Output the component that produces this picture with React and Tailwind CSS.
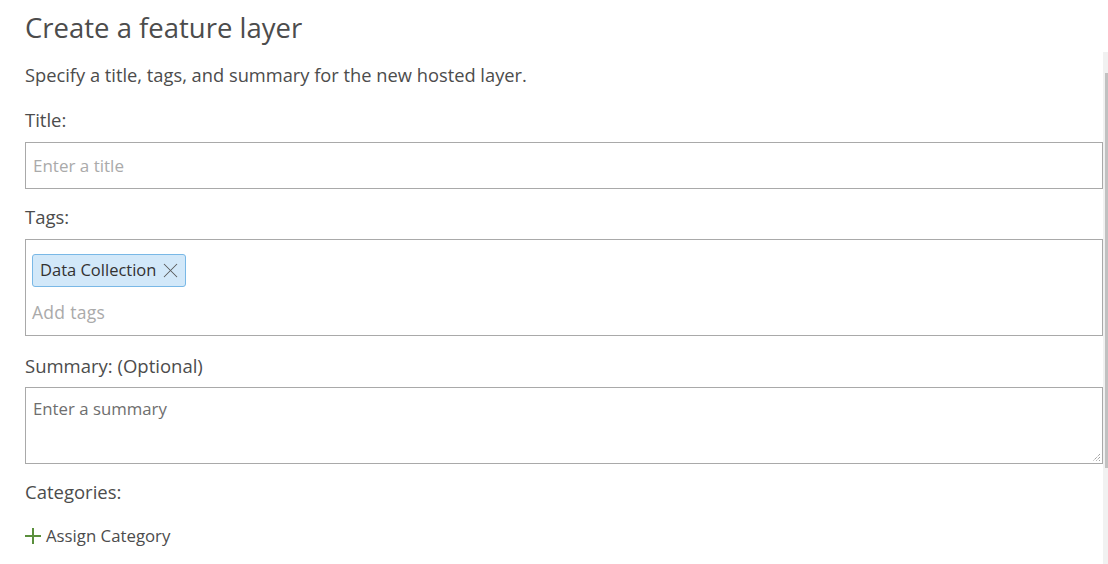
import { X } from "lucide-react";

const font = { fontFamily: '"Open Sans", "Liberation Sans", sans-serif' };

function Label({ children, className = "" }) {
  return <p className={`text-[18.5px] leading-6 text-[#4c4c4c] ${className}`}>{children}</p>;
}

export default function App() {
  return (
    <div className="flex h-[564px] w-[1108px] overflow-hidden bg-white" style={font}>
      <div className="flex-1 pl-[25px]">
        <h1 className="mt-[11px] text-[27.5px] leading-[34px] text-[#4c4c4c]">Create a feature layer</h1>

        <p className="mt-[18px] text-[18.3px] leading-6 text-[#4c4c4c]">
          Specify a title, tags, and summary for the new hosted layer.
        </p>

        <Label className="mt-[21px]">Title:</Label>
        <div className="mt-[10px] flex h-[47px] items-center border border-[#a9a9a9] px-[7px] text-[17px] text-[#aaaaaa]">
          Enter a title
        </div>

        <Label className="mt-[16px]">Tags:</Label>
        <div className="mt-[10px] h-[97px] border border-[#a9a9a9] px-[6px] pt-[14px]">
          <span className="inline-flex h-[33px] items-center gap-[2px] rounded-[3px] border border-[#79b8e6] bg-[#d2e8f9] pl-[7px] pr-[2px] text-[16.5px] text-[#323232]">
            Data Collection
            <X className="h-[25px] w-[25px] text-[#595959]" strokeWidth={1} />
          </span>
          <p className="mt-[13px] text-[17.5px] leading-6 tracking-[0.3px] text-[#aaaaaa]">Add tags</p>
        </div>

        <Label className="mt-[18px]">Summary: (Optional)</Label>
        <div className="relative mt-[9px] h-[77px] border border-[#a9a9a9] px-[7px] pt-[9px] text-[16.8px] leading-6 text-[#6e6e6e]">
          Enter a summary
          <svg className="absolute bottom-[1px] right-[1px]" width="10" height="10" viewBox="0 0 10 10">
            <path d="M9 2 L2 9 M9 5 L5 9 M9 8 L8 9" stroke="#7a7a7a" strokeWidth="1" strokeDasharray="1 1" />
          </svg>
        </div>

        <Label className="mt-[16px]">Categories:</Label>

        <button className="mt-[19px] flex items-center gap-[5px] text-[16.8px] text-[#4c4c4c]">
          <svg width="16" height="16" viewBox="0 0 16 16">
            <path d="M8 0 V16 M0 8 H16" stroke="#5a8f3c" strokeWidth="2" />
          </svg>
          Assign Category
        </button>
      </div>

      <div className="w-[5px] pt-[52px]">
        <div className="h-full bg-[#f1f1f1] pt-[21px]">
          <div className="ml-[2px] h-[395px] bg-[#c1c1c1]" />
        </div>
      </div>
    </div>
  );
}
